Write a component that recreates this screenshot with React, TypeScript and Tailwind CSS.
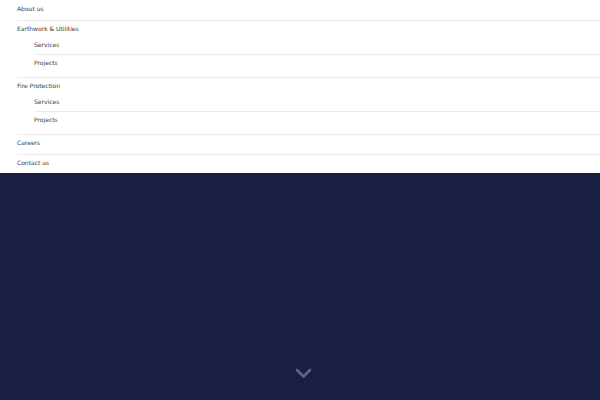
import React from "react";

type Item = { label: string; children?: string[] };

const items: Item[] = [
  { label: "About us" },
  { label: "Earthwork & Utilities", children: ["Services", "Projects"] },
  { label: "Fire Protection", children: ["Services", "Projects"] },
  { label: "Careers" },
  { label: "Contact us" },
];

export default function App() {
  return (
    <div
      className="w-[600px] h-[400px] bg-white flex flex-col overflow-hidden"
      style={{ fontFamily: '"DejaVu Sans", Verdana, sans-serif' }}
    >
      <nav className="pl-[17px] pt-[1px]">
        <ul className="flex flex-col text-[6px] text-[#404040]">
          {items.map((it, i) => {
            const last = i === items.length - 1;
            return (
              <li
                key={i}
                className={
                  (it.children ? "pb-[6px] " : last ? "pb-[2px] " : "pb-[3px] ") +
                  (last ? "" : "border-b border-[#ececec]")
                }
              >
                <a className="block leading-[16px]">{it.label}</a>
                {it.children && (
                  <ul className="pl-[17px] flex flex-col">
                    {it.children.map((c, j) => (
                      <li
                        key={j}
                        className={
                          j < it.children!.length - 1
                            ? "pb-[1px] border-b border-[#ececec]"
                            : ""
                        }
                      >
                        <a className="block leading-[16px]">{c}</a>
                      </li>
                    ))}
                  </ul>
                )}
              </li>
            );
          })}
        </ul>
      </nav>
      <div className="flex-1 bg-[#1a1f42] flex flex-col items-center justify-end pb-[21px]">
        <svg width="17" height="11" viewBox="0 0 17 11" fill="none" className="ml-[6px]">
          <path
            d="M2 2 L8.5 8.5 L15 2"
            stroke="#5d628c"
            strokeWidth="2.6"
            strokeLinecap="round"
            strokeLinejoin="round"
          />
        </svg>
      </div>
    </div>
  );
}
